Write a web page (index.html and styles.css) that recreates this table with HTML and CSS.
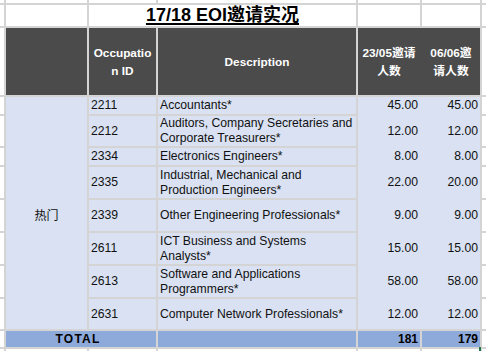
FILE: index.html
```html
<!DOCTYPE html>
<html lang="zh">
<head>
<meta charset="utf-8">
<title>17/18 EOI邀请实况</title>
<link rel="stylesheet" href="styles.css">
</head>
<body>
<div class="sheet">
  <!-- top sliver row -->
  <div class="c"></div><div class="c"></div><div class="c"></div><div class="c"></div><div class="c"></div><div class="c"></div><div class="c"></div>

  <!-- title row -->
  <div class="c"></div>
  <div class="c"></div>
  <div class="c title"><span class="title-text">17/18 EOI邀请实况</span></div>
  <div class="c"></div>
  <div class="c"></div>
  <div class="c"></div>

  <!-- header row -->
  <div class="c"></div>
  <div class="hd"></div>
  <div class="hd">Occupatio<br>n ID</div>
  <div class="hd">Description</div>
  <div class="hd-pair">
    <div class="hd">23/05邀请<br>人数</div>
    <div class="hd">06/06邀<br>请人数</div>
  </div>
  <div class="c"></div>

  <!-- merged cells of the data block -->
  <div class="grp">热门</div>
  <div class="nums">
    <div class="num">45.00</div><div class="num">45.00</div>
    <div class="num">12.00</div><div class="num">12.00</div>
    <div class="num">8.00</div><div class="num">8.00</div>
    <div class="num">22.00</div><div class="num">20.00</div>
    <div class="num">9.00</div><div class="num">9.00</div>
    <div class="num">15.00</div><div class="num">15.00</div>
    <div class="num">58.00</div><div class="num">58.00</div>
    <div class="num">12.00</div><div class="num">12.00</div>
  </div>

  <div class="c"></div><div class="d">2211</div><div class="d">Accountants*</div><div class="c"></div>
  <div class="c"></div><div class="d">2212</div><div class="d">Auditors, Company Secretaries and Corporate Treasurers*</div><div class="c"></div>
  <div class="c"></div><div class="d">2334</div><div class="d">Electronics Engineers*</div><div class="c"></div>
  <div class="c"></div><div class="d">2335</div><div class="d">Industrial, Mechanical and Production Engineers*</div><div class="c"></div>
  <div class="c"></div><div class="d">2339</div><div class="d">Other Engineering Professionals*</div><div class="c"></div>
  <div class="c"></div><div class="d">2611</div><div class="d">ICT Business and Systems Analysts*</div><div class="c"></div>
  <div class="c"></div><div class="d">2613</div><div class="d">Software and Applications Programmers*</div><div class="c"></div>
  <div class="c"></div><div class="d">2631</div><div class="d">Computer Network Professionals*</div><div class="c"></div>

  <!-- total row -->
  <div class="c"></div>
  <div class="tot tot-label">TOTAL</div>
  <div class="tot"></div>
  <div class="tot tot-num">181</div>
  <div class="tot tot-num">179</div>
  <div class="c"></div>

  <!-- bottom sliver row -->
  <div class="c"></div><div class="c"></div><div class="c"></div><div class="c"></div><div class="c"></div><div class="c"></div><div class="c"></div>

  <div class="sel"></div>
</div>
</body>
</html>
```

FILE: styles.css
```css
html, body {
  margin: 0;
  padding: 0;
  background: #ffffff;
}

body {
  width: 486px;
  height: 351px;
  overflow: hidden;
  font-family: "Liberation Sans", Arial, "Noto Sans CJK SC", sans-serif;
  color: #111111;
}

.sheet {
  position: relative;
  display: grid;
  grid-template-columns: 4px 81px 67px 198px 62px 58px 1fr;
  grid-template-rows: 3px 21px 67px 17px 30px 17px 31px 31px 31px 31px 30px 16px 1fr;
  gap: 2px;
  height: 351px;
  background: #d4d4d4;
}

.c {
  background: #ffffff;
}

.title {
  grid-column: span 2;
  display: flex;
  align-items: center;
  justify-content: center;
}

.title-text {
  font-size: 18px;
  line-height: 21px;
  font-weight: bold;
  color: #000000;
  text-decoration: underline;
  text-decoration-thickness: 2px;
  text-underline-offset: 2px;
}

.hd {
  background: #4b4b4b;
  color: #ffffff;
  font-weight: bold;
  font-size: 11.8px;
  line-height: 18px;
  display: flex;
  align-items: center;
  justify-content: center;
  text-align: center;
}

.hd-pair {
  grid-column: span 2;
  background: #4b4b4b;
  display: grid;
  grid-template-columns: 62px 58px;
  column-gap: 2px;
}

.grp {
  grid-column: 2;
  grid-row: 4 / span 8;
  background: #d9e1f2;
  display: flex;
  align-items: center;
  justify-content: center;
  font-size: 12px;
  padding-top: 3px;
}

.nums {
  grid-column: 5 / span 2;
  grid-row: 4 / span 8;
  background: #d9e1f2;
  display: grid;
  grid-template-columns: 62px 58px;
  grid-template-rows: 17px 30px 17px 31px 31px 31px 31px 30px;
  gap: 2px;
}

.num {
  display: flex;
  align-items: center;
  justify-content: flex-end;
  padding-right: 2px;
  font-size: 12.2px;
  line-height: 15px;
}

.d {
  background: #d9e1f2;
  display: flex;
  align-items: center;
  padding-left: 2px;
  font-size: 12.2px;
  line-height: 15px;
}

.tot {
  background: #8eaadb;
  font-weight: bold;
  font-size: 12px;
  line-height: 16px;
  color: #000000;
}

.tot-label {
  grid-column: span 2;
  text-align: center;
  letter-spacing: 1.2px;
  padding-right: 6px;
}

.tot-num {
  text-align: right;
  padding-right: 2px;
}

.sel {
  position: absolute;
  left: 479px;
  top: 347px;
  width: 2px;
  height: 4px;
  background: #217346;
}
```
